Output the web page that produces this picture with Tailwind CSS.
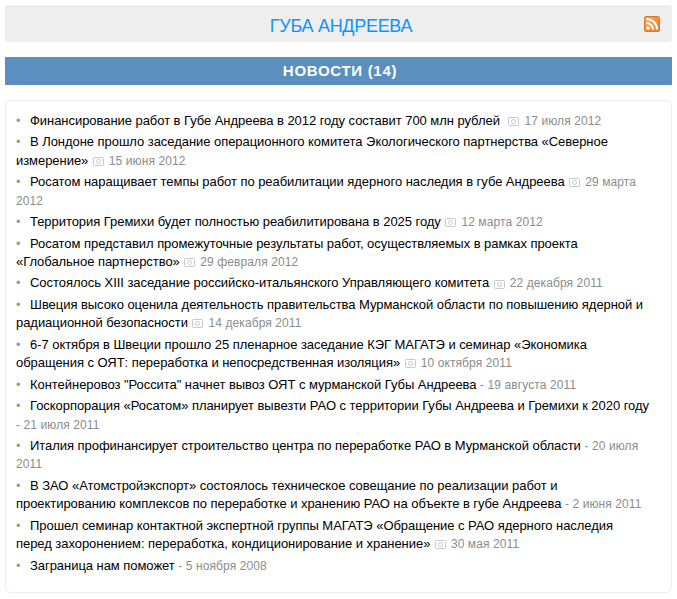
<!DOCTYPE html>
<html lang="ru">

<head>
  <meta charset="UTF-8" />
  <meta name="viewport" content="width=device-width, initial-scale=1.0" />
  <title>Губа Андреева</title>
  <script src="https://cdn.jsdelivr.net/npm/@tailwindcss/browser@4"></script>
</head>

<body class="bg-white font-['Liberation_Sans',Arial,sans-serif] px-[5px] pt-[5px] h-[599px] overflow-hidden">
  <svg class="hidden">
    <symbol id="cam" viewBox="0 0 11 9">
      <rect x="0.5" y="0.5" width="10" height="8" rx="1" fill="none" stroke="#c8c8c8" />
      <circle cx="5.5" cy="4.5" r="2" fill="none" stroke="#c8c8c8" />
    </symbol>
  </svg>

  <header class="h-[37px] bg-[#eeeeee] rounded-[3px] flex items-center justify-center relative">
    <a href="#" class="text-[#0f93ff] text-[18px] tracking-[-0.3px] leading-[22px] mt-[5px] ml-[5px]">ГУБА АНДРЕЕВА</a>
    <a href="#" class="absolute right-[12px] top-[11px] w-[16px] h-[16px] rounded-[2px] bg-gradient-to-br from-[#fba55c] to-[#ee7c24] border border-[#d9772c]">
      <svg viewBox="0 0 14 14" class="w-[14px] h-[14px]" fill="none" stroke="#fff" stroke-width="2.2">
        <circle cx="3" cy="11" r="1.7" fill="#fff" stroke="none" />
        <path d="M1.5 6a6.500 6.500 0 0 1 6.500 6.500" />
        <path d="M1.5 2a10.500 10.500 0 0 1 10.500 10.500" />
      </svg>
    </a>
  </header>

  <h2 class="mt-[15px] h-[28px] bg-[#5a8fc0] text-white text-[15px] font-bold tracking-[0.7px] pl-[3px] flex items-center justify-center">НОВОСТИ (14)</h2>

  <ul class="mt-[15px] h-[493px] border border-[#eeeeee] rounded-[6px] pt-[11px] pl-[10px] pr-[20px] flex flex-col gap-[2.9px] text-[13px] tracking-[-0.05px] leading-[18.5px] text-black">
    <li><span class="text-[#999999] mr-[9.5px]">•</span>Финансирование работ в Губе Андреева в 2012 году составит 700 млн рублей <svg class="inline w-[11px] h-[9px] ml-[5px] mr-[5px]"><use href="#cam" /></svg><span class="text-[#8c8c8c] text-[12px] tracking-[0.1px]">17 июля 2012</span></li>
    <li><span class="text-[#999999] mr-[9.5px]">•</span>В Лондоне прошло заседание операционного комитета Экологического партнерства «Северное измерение» <svg class="inline w-[11px] h-[9px] ml-[1px] mr-[5px]"><use href="#cam" /></svg><span class="text-[#8c8c8c] text-[12px] tracking-[0.1px]">15 июня 2012</span></li>
    <li><span class="text-[#999999] mr-[9.5px]">•</span>Росатом наращивает темпы работ по реабилитации ядерного наследия в губе Андреева <svg class="inline w-[11px] h-[9px] ml-[1px] mr-[5px]"><use href="#cam" /></svg><span class="text-[#8c8c8c] text-[12px] tracking-[0.1px]">29 марта 2012</span></li>
    <li><span class="text-[#999999] mr-[9.5px]">•</span>Территория Гремихи будет полностью реабилитирована в 2025 году <svg class="inline w-[11px] h-[9px] ml-[1px] mr-[5px]"><use href="#cam" /></svg><span class="text-[#8c8c8c] text-[12px] tracking-[0.1px]">12 марта 2012</span></li>
    <li><span class="text-[#999999] mr-[9.5px]">•</span>Росатом представил промежуточные результаты работ, осуществляемых в рамках проекта «Глобальное партнерство» <svg class="inline w-[11px] h-[9px] ml-[1px] mr-[5px]"><use href="#cam" /></svg><span class="text-[#8c8c8c] text-[12px] tracking-[0.1px]">29 февраля 2012</span></li>
    <li><span class="text-[#999999] mr-[9.5px]">•</span>Состоялось XIII заседание российско-итальянского Управляющего комитета <svg class="inline w-[11px] h-[9px] ml-[1px] mr-[5px]"><use href="#cam" /></svg><span class="text-[#8c8c8c] text-[12px] tracking-[0.1px]">22 декабря 2011</span></li>
    <li><span class="text-[#999999] mr-[9.5px]">•</span>Швеция высоко оценила деятельность правительства Мурманской области по повышению ядерной и радиационной безопасности <svg class="inline w-[11px] h-[9px] ml-[1px] mr-[5px]"><use href="#cam" /></svg><span class="text-[#8c8c8c] text-[12px] tracking-[0.1px]">14 декабря 2011</span></li>
    <li><span class="text-[#999999] mr-[9.5px]">•</span>6-7 октября в Швеции прошло 25 пленарное заседание КЭГ МАГАТЭ и семинар «Экономика обращения с ОЯТ: переработка и непосредственная изоляция» <svg class="inline w-[11px] h-[9px] ml-[1px] mr-[5px]"><use href="#cam" /></svg><span class="text-[#8c8c8c] text-[12px] tracking-[0.1px]">10 октября 2011</span></li>
    <li><span class="text-[#999999] mr-[9.5px]">•</span>Контейнеровоз "Россита" начнет вывоз ОЯТ с мурманской Губы Андреева <span class="text-[#8c8c8c] text-[12px] tracking-[0.1px]">- 19 августа 2011</span></li>
    <li><span class="text-[#999999] mr-[9.5px]">•</span>Госкорпорация «Росатом» планирует вывезти РАО с территории Губы Андреева и Гремихи к 2020 году <span class="text-[#8c8c8c] text-[12px] tracking-[0.1px]">- 21 июля 2011</span></li>
    <li><span class="text-[#999999] mr-[9.5px]">•</span>Италия профинансирует строительство центра по переработке РАО в Мурманской области <span class="text-[#8c8c8c] text-[12px] tracking-[0.1px]">- 20 июля 2011</span></li>
    <li><span class="text-[#999999] mr-[9.5px]">•</span>В ЗАО «Атомстройэкспорт» состоялось техническое совещание по реализации работ и проектированию комплексов по переработке и хранению РАО на объекте в губе Андреева <span class="text-[#8c8c8c] text-[12px] tracking-[0.1px]">- 2 июня 2011</span></li>
    <li><span class="text-[#999999] mr-[9.5px]">•</span>Прошел семинар контактной экспертной группы МАГАТЭ «Обращение с РАО ядерного наследия перед захоронением: переработка, кондиционирование и хранение» <svg class="inline w-[11px] h-[9px] ml-[1px] mr-[5px]"><use href="#cam" /></svg><span class="text-[#8c8c8c] text-[12px] tracking-[0.1px]">30 мая 2011</span></li>
    <li><span class="text-[#999999] mr-[9.5px]">•</span>Заграница нам поможет <span class="text-[#8c8c8c] text-[12px] tracking-[0.1px]">- 5 ноября 2008</span></li>
  </ul>
</body>

</html>
